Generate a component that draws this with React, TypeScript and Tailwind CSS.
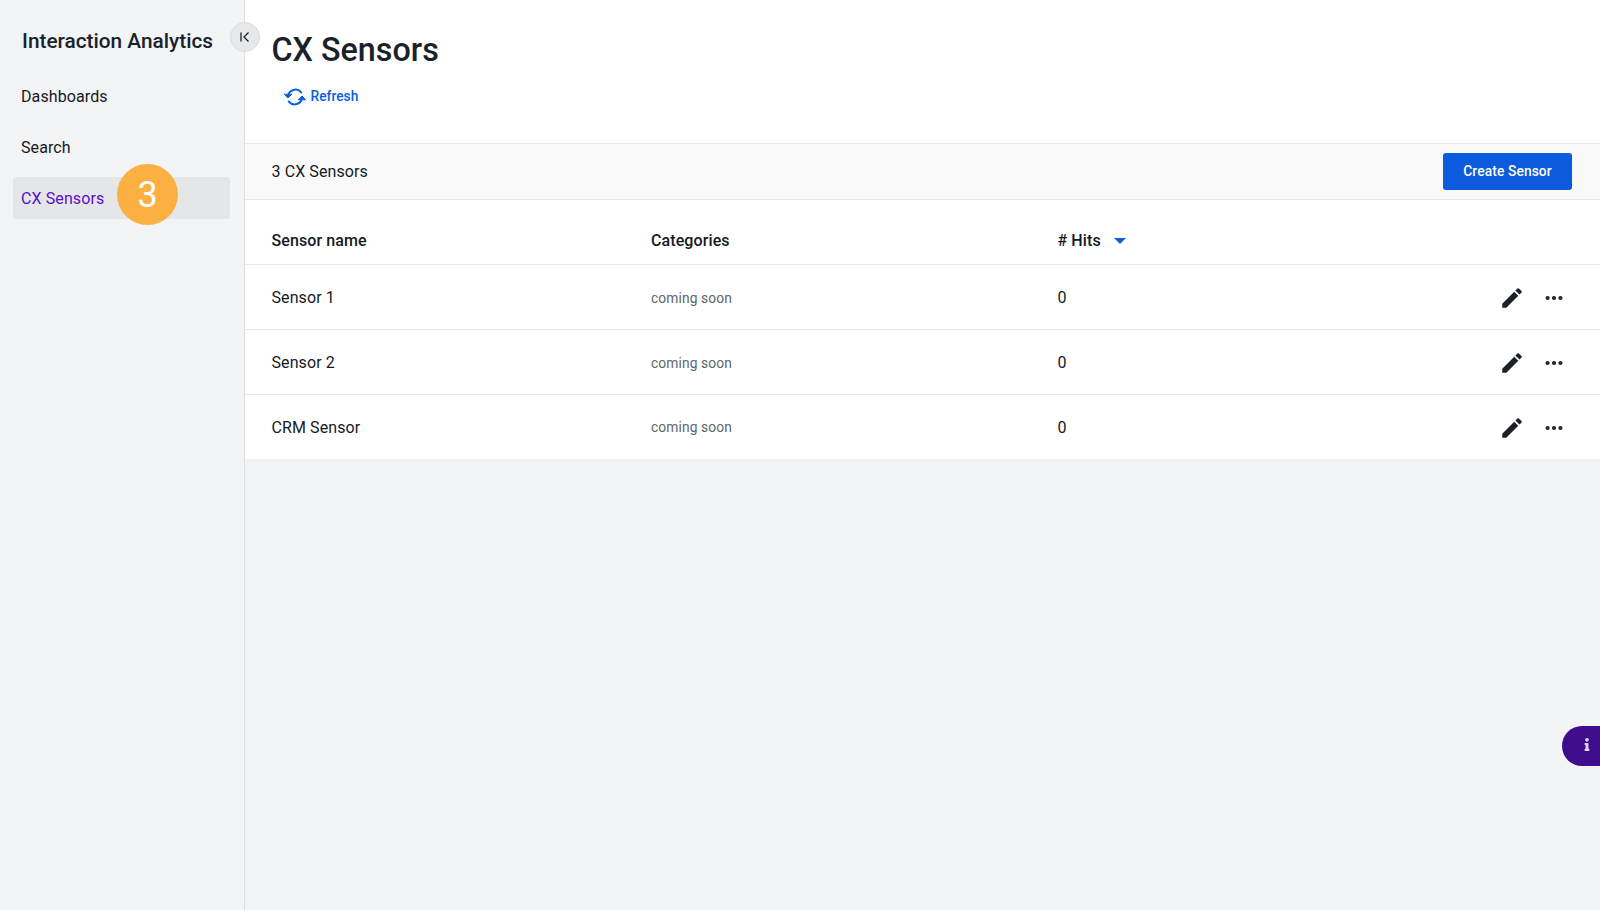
import React from "react";
import { MoreHorizontal } from "lucide-react";
import { FaInfo } from "react-icons/fa";

const sensors = ["Sensor 1", "Sensor 2", "CRM Sensor"];

const gridCols = "grid grid-cols-[379.5px_406.5px_1fr_auto] items-center pl-[26.5px] tracking-[0.1px]";

const PencilIcon = () => (
  <svg viewBox="0 0 24 24" className="w-[26px] h-[26px] text-[#1b2129]" fill="currentColor">
    <path d="M3 17.25V21h3.75L17.81 9.94l-3.75-3.75L3 17.25zM20.71 7.04a1 1 0 0 0 0-1.41l-2.34-2.34a1 1 0 0 0-1.41 0l-1.83 1.83 3.75 3.75 1.83-1.83z" />
  </svg>
);

const RefreshIcon = () => (
  <svg viewBox="0 0 24 24" className="w-[24px] h-[24px] text-[#0b5fdf]" fill="none" stroke="currentColor" strokeWidth={2} strokeLinecap="round">
    <path d="M5 11a7.5 7.5 0 0 1 13.2-3.6" />
    <path d="M19 13a7.5 7.5 0 0 1-13.2 3.6" />
    <path d="M1.5 9.5 5 13l3.5-3.5z" fill="currentColor" strokeWidth={1} strokeLinejoin="round" />
    <path d="M15.5 14.5 19 11l3.5 3.5z" fill="currentColor" strokeWidth={1} strokeLinejoin="round" />
  </svg>
);

const Sidebar = () => (
  <aside className="relative w-[245px] shrink-0 bg-[#f3f4f6] border-r border-[#dcdee1]">
    <div className="pl-[22px] pt-[27px] text-[20.8px] leading-[28px] font-medium text-[#1b2129]">
      Interaction Analytics
    </div>
    <nav className="mt-[21px] px-[13px] flex flex-col gap-[9px] text-[16px] tracking-[0.1px] text-[#16191d]">
      <a className="h-[42px] flex items-center px-[8px]">Dashboards</a>
      <a className="h-[42px] flex items-center px-[8px]">Search</a>
      <a className="h-[42px] -mt-[1px] pt-[1px] flex items-center px-[8px] w-[217px] rounded-[4px] bg-[#e5e6e8] text-[#5a0fc8]">
        CX Sensors
      </a>
    </nav>
    {/* collapse toggle sits across the sidebar edge */}
    <button className="absolute left-[230px] top-[22px] w-[30px] h-[30px] rounded-full bg-[#e7e8ea] border border-[#d9dbde] flex items-center justify-center">
      <svg viewBox="0 0 12 12" className="w-[12px] h-[12px] text-[#1b2129]" fill="none" stroke="currentColor" strokeWidth={1.3}>
        <path d="M2 1.5v9" />
        <path d="M9.5 1.5 5 6l4.5 4.5" />
      </svg>
    </button>
    {/* step marker */}
    <div className="absolute left-[117px] top-[164px] w-[61px] h-[61px] rounded-full bg-[#fdb042] flex items-center justify-center text-white text-[36px] font-normal">
      3
    </div>
  </aside>
);

export default function App() {
  return (
    <div className="relative flex h-[910px] w-[1600px] overflow-hidden bg-[#f3f4f6] font-['Roboto',sans-serif]">
      <Sidebar />
      <main className="flex-1 min-w-0">
        <header className="h-[144px] bg-white border-b border-[#e6e7e9] pl-[26.5px] pt-[28px]">
          <h1 className="text-[32.3px] leading-[44px] font-medium text-[#1b2129]">CX Sensors</h1>
          <button className="mt-[4px] ml-[12px] flex items-center gap-[4px] text-[13.8px] font-medium text-[#0b5fdf] h-[40px]">
            <span className="mt-[2px] -ml-[1px]">
              <RefreshIcon />
            </span>
            Refresh
          </button>
        </header>

        <div className="h-[56px] bg-[#f9f9f9] border-b border-[#e6e7e9] flex items-center justify-between pl-[26.5px] pr-[28px] text-[16px] tracking-[0.1px] text-[#16191d]">
          <span>3 CX Sensors</span>
          <button className="w-[129px] h-[37px] rounded-[3px] bg-[#0b5bdc] text-white text-[13.8px] font-medium">
            Create Sensor
          </button>
        </div>

        <div className="bg-white">
          <div className={`${gridCols} h-[65px] border-b border-[#e6e7e9] pt-[18px] text-[16px] font-medium text-[#16191d]`}>
            <span>Sensor name</span>
            <span>Categories</span>
            <span className="flex items-center gap-[13px]">
              # Hits
              <svg viewBox="0 0 12 6" className="w-[12px] h-[6px] text-[#0b5fdf]" fill="currentColor">
                <path d="M0 0h12L6 6z" />
              </svg>
            </span>
          </div>
          {sensors.map((name, i) => (
            <div
              key={name}
              className={`${gridCols} text-[16px] text-[#16191d] ${i < sensors.length - 1 ? "h-[65px] pt-[2px] border-b border-[#e6e7e9]" : "h-[64px] pt-[1px]"}`}
            >
              <span>{name}</span>
              <span className="text-[13.8px] text-[#60656c]">coming soon</span>
              <span>0</span>
              <div className="flex items-center gap-[18px] pr-[35px]">
                <PencilIcon />
                <MoreHorizontal className="w-[22px] h-[22px] text-[#1b2129]" strokeWidth={2.6} />
              </div>
            </div>
          ))}
        </div>
      </main>

      {/* help tab pinned to the right edge */}
      <div className="absolute right-0 top-[726px] w-[38px] h-[40px] rounded-l-[20px] bg-[#3f0d8c] flex items-center justify-end pr-[7px] pb-[4px]">
        <FaInfo className="w-[12px] h-[13px] text-[#e3d5f5]" />
      </div>
    </div>
  );
}
